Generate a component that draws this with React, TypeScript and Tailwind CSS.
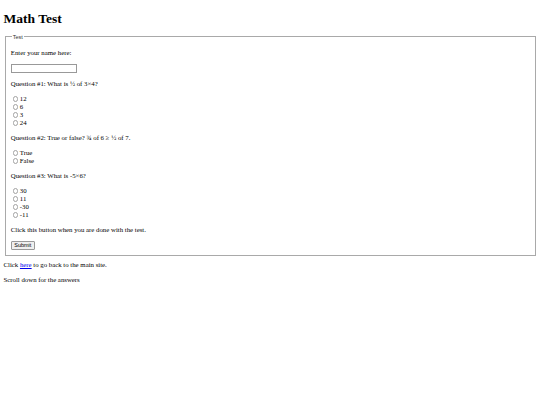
function Radio({ label }: { label: string }) {
  return (
    <label className="flex h-[8px] items-center">
      <span className="ml-[2px] mr-[1.5px] inline-block h-[5.5px] w-[5.5px] shrink-0 rounded-full border-[0.6px] border-[#a3a3a3] bg-white" />
      <span>{label}</span>
    </label>
  );
}

export default function App() {
  return (
    <div className="min-h-[405px] bg-white p-[3.5px] text-[6.8px] leading-[8px] text-black font-['Liberation_Serif',serif]">
      <h1 className="my-[7px] text-[13.5px] leading-[15px] font-bold">Math Test</h1>
      <fieldset className="mx-[1px] border border-[#a9a9a9] px-[5.25px] pt-[1.5px] pb-[5px]">
        <legend className="ml-[1px] px-[1px] text-[5.5px] leading-[8px] font-['Liberation_Sans',sans-serif] text-[#333]">
          Test
        </legend>
        <p className="my-[7px]">Enter your name here:</p>
        <div className="h-[9px] w-[66px] border border-[#999] bg-white" />
        <p className="my-[7px]">Question #1: What is ½ of 3×4?</p>
        <div>
          <Radio label="12" />
          <Radio label="6" />
          <Radio label="3" />
          <Radio label="24" />
        </div>
        <p className="my-[7px]">Question #2: True or false? ¾ of 6 ≥ ½ of 7.</p>
        <div>
          <Radio label="True" />
          <Radio label="False" />
        </div>
        <p className="my-[7px]">Question #3: What is -5×6?</p>
        <div>
          <Radio label="30" />
          <Radio label="11" />
          <Radio label="-30" />
          <Radio label="-11" />
        </div>
        <p className="my-[7px]">Click this button when you are done with the test.</p>
        <button className="block h-[9px] rounded-[1px] border border-[#999] bg-[#efefef] px-[2.5px] text-[5.5px] leading-[7px] font-['Liberation_Sans',sans-serif]">
          Submit
        </button>
      </fieldset>
      <p className="mt-[5px] mb-[7px]">
        Click <a className="text-[#0000ee] underline">here</a> to go back to the main site.
      </p>
      <p className="my-[7px]">Scroll down for the answers</p>
    </div>
  );
}
